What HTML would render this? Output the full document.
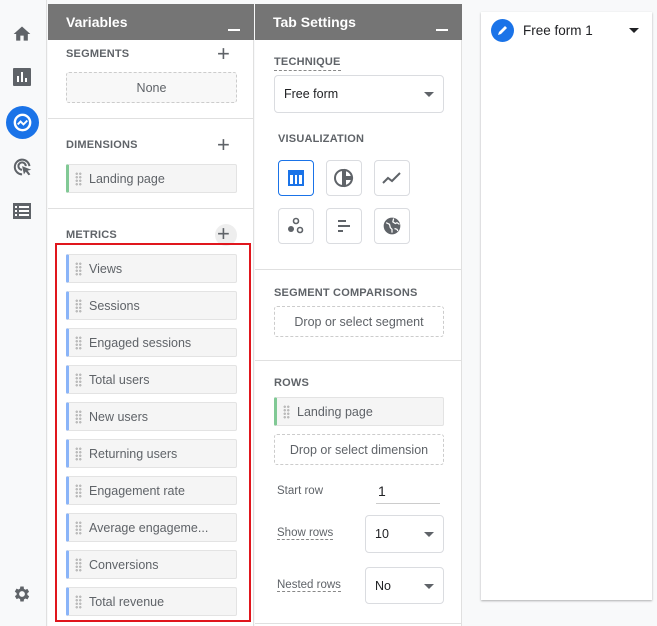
<!DOCTYPE html><html><head><style>
*{box-sizing:border-box;margin:0;padding:0}
body{width:657px;height:626px;overflow:hidden;background:#f8f9fa;font-family:"Liberation Sans",sans-serif;position:relative;color:#3c4043}
.a{position:absolute}
.hdr{background:#757575;color:#fff;font-weight:bold;font-size:14px;height:36px;top:4px;padding:10px 0 0 18px}
.hdr i{position:absolute;right:14px;top:25px;width:12px;height:2px;background:#fff}
.pn{background:#fff;top:4px;height:622px}
.lab{font-size:11px;font-weight:bold;color:#5f6368;letter-spacing:.2px}
.item{position:absolute;left:66px;width:171px;height:29px;background:#f5f5f5;border:1px solid #e3e3e3;border-left:3px solid #8ab4f8;border-radius:2px;font-size:12.5px;padding:7px 0 0 20px;color:#5f6368}
.item:before{content:"";position:absolute;left:6px;top:7px;width:7px;height:14px;background-image:radial-gradient(circle,#bbb 1.1px,transparent 1.3px);background-size:3.5px 3.5px}
.dash{position:absolute;border:1px dashed #ccc;border-radius:3px;font-size:12.5px;text-align:center;color:#5f6368}
.sel{position:absolute;border:1px solid #dadce0;border-radius:4px;font-size:12.5px;padding:0 0 0 9px;color:#202124}
.sel:after{content:"";position:absolute;right:9px;top:50%;margin-top:-2px;border:5px solid transparent;border-top:5px solid #5f6368;border-bottom:0}
.vb{position:absolute;width:36px;height:36px;border:1px solid #dadce0;border-radius:4px;display:flex;align-items:center;justify-content:center}
.plus{position:absolute;font-size:22px;color:#5f6368;font-weight:300;line-height:1}
.hr{position:absolute;height:1px;background:#e0e0e0}
</style></head><body>
<div class="a" style="left:0;top:0;width:47px;height:626px;background:#f8f9fa;border-right:1px solid #e0e0e0"></div>
<svg class="a" style="left:12px;top:24px" width="20" height="20" viewBox="0 0 24 24"><path fill="#5f6368" d="M12 3L2 12h3v8h5v-6h4v6h5v-8h3z"/></svg>
<svg class="a" style="left:13px;top:68px" width="18" height="18" viewBox="0 0 18 18"><rect width="18" height="18" rx="1" fill="#5f6368"/><rect x="4" y="8" width="2" height="6" fill="#fff"/><rect x="8" y="4" width="2" height="10" fill="#fff"/><rect x="12" y="10" width="2" height="4" fill="#fff"/></svg>
<div class="a" style="left:6px;top:106px;width:33px;height:33px;border-radius:50%;background:#1a73e8"></div>
<svg class="a" style="left:11px;top:111px" width="23" height="23" viewBox="0 0 24 24"><circle cx="12" cy="12" r="8" fill="none" stroke="#fff" stroke-width="2.5"/><path d="M7 14l3-3 3 3 4-4" fill="none" stroke="#fff" stroke-width="2"/></svg>
<svg class="a" style="left:12px;top:156px" width="22" height="22" viewBox="0 0 24 24"><path d="M11 20a8 8 0 1 1 8-9" fill="none" stroke="#5f6368" stroke-width="2.2"/><path d="M11 15a4 4 0 1 1 4-4" fill="none" stroke="#5f6368" stroke-width="2.2"/><path d="M11 11l10 4-4 1 3 4-2 1-3-4-2 3z" fill="#5f6368"/></svg>
<svg class="a" style="left:13px;top:203px" width="18" height="16" viewBox="0 0 18 16"><rect width="18" height="16" fill="#5f6368"/><g fill="#fff"><rect x="2" y="3" width="2" height="2"/><rect x="6" y="3" width="10" height="2"/><rect x="2" y="7" width="2" height="2"/><rect x="6" y="7" width="10" height="2"/><rect x="2" y="11" width="2" height="2"/><rect x="6" y="11" width="10" height="2"/></g></svg>
<svg class="a" style="left:12px;top:584px" width="20" height="20" viewBox="0 0 24 24"><path fill="#5f6368" d="M19.4 13a7.5 7.5 0 0 0 0-2l2.1-1.6-2-3.5-2.5 1a7 7 0 0 0-1.7-1L15 3h-4l-.4 2.6a7 7 0 0 0-1.7 1l-2.5-1-2 3.5L6.6 11a7.5 7.5 0 0 0 0 2l-2.1 1.6 2 3.5 2.5-1a7 7 0 0 0 1.7 1L11 21h4l.4-2.6a7 7 0 0 0 1.7-1l2.5 1 2-3.5zM13 15.5a3.5 3.5 0 1 1 0-7 3.5 3.5 0 0 1 0 7z" transform="translate(-1 0)"/></svg>

<div class="a pn" style="left:48px;width:206px;border-right:1px solid #e0e0e0"></div>
<div class="a hdr" style="left:48px;width:206px">Variables<i></i></div>
<div class="a lab" style="left:66px;top:48px">SEGMENTS</div><div class="plus" style="left:217px;top:43px">+</div>
<div class="dash" style="left:66px;top:72px;width:171px;height:31px;padding-top:8px;background:#f8f8f8">None</div>
<div class="hr" style="left:48px;top:118px;width:206px"></div>
<div class="a lab" style="left:66px;top:139px">DIMENSIONS</div><div class="plus" style="left:217px;top:134px">+</div>
<div class="item" style="top:164px;border-left-color:#81c995">Landing page</div>
<div class="hr" style="left:48px;top:208px;width:206px"></div>
<div class="a lab" style="left:66px;top:229px">METRICS</div>
<div class="a" style="left:215px;top:224px;width:22px;height:22px;border-radius:50%;background:#eee"></div><div class="plus" style="left:217px;top:223px">+</div>
<div class="item" style="top:254px">Views</div>
<div class="item" style="top:291px">Sessions</div>
<div class="item" style="top:328px">Engaged sessions</div>
<div class="item" style="top:365px">Total users</div>
<div class="item" style="top:402px">New users</div>
<div class="item" style="top:439px">Returning users</div>
<div class="item" style="top:476px">Engagement rate</div>
<div class="item" style="top:513px">Average engageme...</div>
<div class="item" style="top:550px">Conversions</div>
<div class="item" style="top:587px">Total revenue</div>
<div class="a" style="left:55px;top:243px;width:196px;height:379px;border:2px solid #e0161d"></div>

<div class="a pn" style="left:255px;width:207px;border-right:1px solid #e0e0e0"></div>
<div class="a hdr" style="left:255px;width:207px">Tab Settings<i></i></div>
<div class="a lab" style="left:274px;top:56px;border-bottom:1px dashed #888;padding-bottom:2px">TECHNIQUE</div>
<div class="sel" style="left:274px;top:75px;width:170px;height:38px;padding-top:11px">Free form</div>
<div class="a lab" style="left:278px;top:133px">VISUALIZATION</div>
<div class="vb" style="left:278px;top:160px;border-color:#1a73e8"><svg width="18" height="18" viewBox="0 0 18 18"><rect x="2" y="2" width="14" height="14" fill="none" stroke="#1a73e8" stroke-width="2"/><rect x="2" y="2" width="14" height="4" fill="#1a73e8"/><path d="M7 6v10M11 6v10" stroke="#1a73e8" stroke-width="2"/></svg></div>
<div class="vb" style="left:326px;top:160px"><svg width="20" height="20" viewBox="0 0 20 20"><path d="M9 2a8 8 0 0 0 0 16zM11 2v7h7a8 8 0 0 0-7-7zM11 11v7a8 8 0 0 0 7-7z" fill="none" stroke="#5f6368" stroke-width="2"/></svg></div>
<div class="vb" style="left:374px;top:160px"><svg width="20" height="14" viewBox="0 0 20 14"><path d="M1 12l5-5 4 3 8-8" fill="none" stroke="#5f6368" stroke-width="2"/></svg></div>
<div class="vb" style="left:278px;top:208px"><svg width="18" height="18" viewBox="0 0 18 18"><circle cx="9" cy="4" r="2.5" fill="none" stroke="#5f6368" stroke-width="1.6"/><circle cx="4" cy="12" r="3" fill="#5f6368"/><circle cx="13" cy="13" r="2.5" fill="none" stroke="#5f6368" stroke-width="1.6"/></svg></div>
<div class="vb" style="left:326px;top:208px"><svg width="16" height="14" viewBox="0 0 16 14"><rect x="2" y="1" width="8" height="2" fill="#5f6368"/><rect x="2" y="6" width="12" height="2" fill="#5f6368"/><rect x="2" y="11" width="5" height="2" fill="#5f6368"/></svg></div>
<div class="vb" style="left:374px;top:208px"><svg width="20" height="20" viewBox="0 0 24 24"><circle cx="12" cy="12" r="10" fill="#5f6368"/><path d="M5 8l4 2 1 4 2 2v4M14 3l-1 4 3 2 2-1 3 2M15 15l3 1 1 2" fill="none" stroke="#fff" stroke-width="1.5"/></svg></div>
<div class="hr" style="left:255px;top:269px;width:207px"></div>
<div class="a lab" style="left:274px;top:287px">SEGMENT COMPARISONS</div>
<div class="dash" style="left:274px;top:306px;width:170px;height:31px;padding-top:8px">Drop or select segment</div>
<div class="hr" style="left:255px;top:360px;width:207px"></div>
<div class="a lab" style="left:274px;top:377px">ROWS</div>
<div class="item" style="left:274px;top:397px;width:170px;border-left-color:#81c995">Landing page</div>
<div class="dash" style="left:274px;top:434px;width:170px;height:31px;padding-top:8px">Drop or select dimension</div>
<div class="a" style="left:277px;top:485px;font-size:11.5px;color:#5f6368">Start row</div>
<div class="a" style="left:376px;top:483px;font-size:14px;width:64px;height:21px;border-bottom:1px solid #ccc;padding-left:2px;color:#202124">1</div>
<div class="a" style="left:277px;top:527px;font-size:11.5px;border-bottom:1px dashed #888;color:#5f6368">Show rows</div>
<div class="sel" style="left:365px;top:515px;width:79px;height:38px;padding-top:11px">10</div>
<div class="a" style="left:277px;top:579px;font-size:11.5px;border-bottom:1px dashed #888;color:#5f6368">Nested rows</div>
<div class="sel" style="left:365px;top:567px;width:79px;height:37px;padding-top:11px">No</div>
<div class="hr" style="left:255px;top:623px;width:207px"></div>

<div class="a" style="left:481px;top:12px;width:171px;height:588px;background:#fff;box-shadow:0 1px 2px rgba(0,0,0,.3)"></div>
<div class="a" style="left:491px;top:19px;width:23px;height:23px;border-radius:50%;background:#1a73e8"></div>
<svg class="a" style="left:496px;top:24px" width="13" height="13" viewBox="0 0 13 13"><path d="M2 11l1-3 6-6 2 2-6 6z" fill="#fff"/></svg>
<div class="a" style="left:523px;top:23px;font-size:13.5px;color:#202124">Free form 1</div>
<div class="a" style="left:629px;top:28px;border:5px solid transparent;border-top:5px solid #202124;border-bottom:0"></div>
</body></html>
